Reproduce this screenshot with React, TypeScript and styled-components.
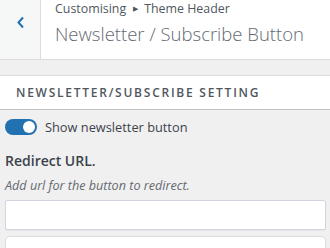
import React, { useState } from 'react'
import styled, { createGlobalStyle } from 'styled-components'

const GlobalStyle = createGlobalStyle`
    body {
        margin: 0;
        background: #f0f0f1;
        font-family: "Open Sans", "Noto Sans", sans-serif;
        color: #3c434a;
    }
`

const Panel = styled.div`
    width: 330px;
    height: 248px;
    overflow: hidden;
    background: #f0f0f1;
`

const Header = styled.header`
    display: flex;
    height: 59px;
    background: #fff;
    border-bottom: 1px solid #dcdcde;
`

const BackButton = styled.button`
    width: 41px;
    flex: none;
    display: flex;
    align-items: flex-start;
    justify-content: center;
    padding: 16px 0 0 0;
    background: #f6f7f7;
    border: 0;
    border-right: 1px solid #dcdcde;
    cursor: pointer;
`

const Titles = styled.div`
    display: flex;
    flex-direction: column;
    padding: 0 0 0 14px;
`

const Crumb = styled.span`
    font-size: 12.4px;
    line-height: 17px;
    color: #50575e;
`

const Arrow = styled.span`
    font-size: 7px;
    margin: 0 6px 0 7px;
    vertical-align: 2px;
`

const Title = styled.h1`
    margin: 5px 0 0 0;
    font-size: 18.5px;
    font-weight: 300;
    line-height: 24px;
    color: #646970;
`

const SectionHead = styled.h3`
    margin: 15px 0 0 0;
    height: 33px;
    display: flex;
    align-items: center;
    padding-left: 16px;
    background: #fff;
    border-top: 1px solid #dcdcde;
    border-bottom: 1px solid #c3c4c7;
    font-size: 12px;
    font-weight: 600;
    letter-spacing: 1.75px;
    text-transform: uppercase;
    color: #50575e;
`

const Body = styled.div`
    display: flex;
    flex-direction: column;
    padding: 0 4px 0 5px;
`

const ToggleRow = styled.label`
    display: flex;
    align-items: center;
    gap: 8px;
    margin-top: 8px;
    font-size: 12.8px;
    color: #3c434a;
`

const Track = styled.span<{ $on: boolean }>`
    position: relative;
    width: 32px;
    height: 16px;
    border-radius: 8px;
    background: ${p => (p.$on ? '#2271b1' : '#8c8f94')};
`

const Knob = styled.span<{ $on: boolean }>`
    position: absolute;
    top: 2px;
    left: ${p => (p.$on ? '18px' : '2px')};
    width: 12px;
    height: 12px;
    border-radius: 50%;
    background: #fff;
`

const FieldLabel = styled.div`
    margin-top: 15px;
    font-size: 14px;
    font-weight: 600;
    color: #3c434a;
`

const Description = styled.div`
    margin-top: 7px;
    font-size: 12.6px;
    font-style: italic;
    color: #646970;
`

const Input = styled.input`
    margin-top: 6px;
    height: 30px;
    box-sizing: border-box;
    border: 1px solid #d4d4e0;
    border-radius: 2px;
    background: #fff;
    box-shadow: 0 1px 1px rgba(0, 0, 0, 0.04);
`

const NextBox = styled.div`
    margin-top: 6px;
    height: 30px;
    border: 1px solid #dcdcde;
    border-radius: 5px;
    background: #fff;
`

export default function App() {
    const [on, setOn] = useState(true)
    const [url, setUrl] = useState('')

    return (
        <Panel>
            <GlobalStyle />
            <Header>
                <BackButton aria-label="Back">
                    <svg width="9" height="13" viewBox="0 0 9 13">
                        <path d="M7 1.5 L2.5 6.5 L7 11.5" fill="none" stroke="#2271b1" strokeWidth="2" />
                    </svg>
                </BackButton>
                <Titles>
                    <Crumb>Customising<Arrow>▶</Arrow>Theme Header</Crumb>
                    <Title>Newsletter / Subscribe Button</Title>
                </Titles>
            </Header>

            <SectionHead>Newsletter/Subscribe Setting</SectionHead>

            <Body>
                <ToggleRow onClick={() => setOn(!on)}>
                    <Track $on={on}><Knob $on={on} /></Track>
                    Show newsletter button
                </ToggleRow>
                <FieldLabel>Redirect URL.</FieldLabel>
                <Description>Add url for the button to redirect.</Description>
                <Input value={url} onChange={e => setUrl(e.target.value)} />
                <NextBox />
            </Body>
        </Panel>
    )
}
